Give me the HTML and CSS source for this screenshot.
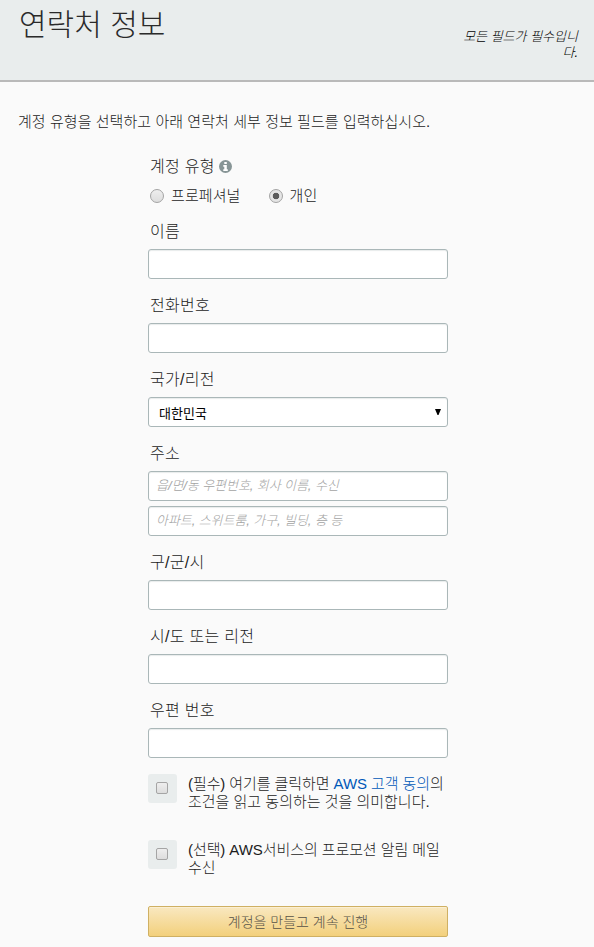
FILE: index.html
```html
<!DOCTYPE html>
<html lang="ko">
<head>
<meta charset="utf-8">
<title>연락처 정보</title>
<link rel="stylesheet" href="styles.css">
</head>
<body>
<header class="header">
  <h1 class="title">연락처 정보</h1>
  <p class="required">모든 필드가 필수입니<br>다.</p>
</header>
<main class="main">
  <p class="intro">계정 유형을 선택하고 아래 연락처 세부 정보 필드를 입력하십시오.</p>
  <form class="form">
    <div class="label type-label"><span>계정 유형</span>
      <svg class="info" viewBox="0 0 13 13"><circle cx="6.5" cy="6.5" r="6.5"/><path d="M5.300 2h2.500v2H5.300zM4.300 5h3.500v4.200h1V11H4.300V9.200h1V6.700h-1z"/></svg>
    </div>
    <div class="radios">
      <label class="choice"><input class="radio" type="radio" name="type"><span>프로페셔널</span></label>
      <label class="choice"><input class="radio" type="radio" name="type" checked><span>개인</span></label>
    </div>
    <div class="field"><label class="label">이름</label><input class="input" type="text"></div>
    <div class="field"><label class="label">전화번호</label><input class="input" type="text"></div>
    <div class="field"><label class="label">국가/리전</label>
      <div class="input select"><span>대한민국</span><svg class="arrow" viewBox="0 0 6 6"><path d="M0 0h6L3.500 6h-1z"/></svg></div>
    </div>
    <div class="field"><label class="label">주소</label>
      <input class="input" type="text" placeholder="읍/면/동 우편번호, 회사 이름, 수신">
      <input class="input second" type="text" placeholder="아파트, 스위트룸, 가구, 빌딩, 층 등">
    </div>
    <div class="field"><label class="label">구/군/시</label><input class="input" type="text"></div>
    <div class="field"><label class="label">시/도 또는 리전</label><input class="input" type="text"></div>
    <div class="field"><label class="label">우편 번호</label><input class="input" type="text"></div>
    <div class="agree">
      <span class="box"><input class="check" type="checkbox"></span>
      <p class="terms"><span class="tight">(필수) 여기를 클릭하면 <a class="link">AWS 고객 동의</a>의</span><br>조건을 읽고 동의하는 것을 의미합니다.</p>
    </div>
    <div class="agree">
      <span class="box"><input class="check" type="checkbox"></span>
      <p class="terms"><span class="tight">(선택) AWS서비스의 프로모션 알림 메일</span><br>수신</p>
    </div>
    <button class="submit" type="button">계정을 만들고 계속 진행</button>
  </form>
</main>
</body>
</html>
```
FILE: styles.css
```css
* { box-sizing: border-box; }
body {
  margin: 0;
  height: 947px;
  overflow: hidden;
  background: #fafafa;
  color: #1c1c1c;
  font-family: "Liberation Sans", "Noto Sans CJK KR", sans-serif;
  font-weight: 300;
}
h1, p { margin: 0; font-weight: 300; white-space: nowrap; }
.header {
  display: flex;
  justify-content: space-between;
  height: 82px;
  padding: 0 16px 0 19px;
  background: #e9eded;
  border-bottom: 2px solid #b9b9b9;
}
.title { font-size: 30px; line-height: 50px; color: #2a2a2a; }
.required {
  padding-top: 29px;
  font-size: 13px;
  line-height: 16px;
  font-style: italic;
  text-align: right;
  color: #000;
}
.main { padding-top: 26px; }
.intro { padding-left: 18px; font-size: 15px; line-height: 28px; letter-spacing: 0.06px; }
.form { width: 300px; margin: 12px 0 0 148px; }
.label { display: block; padding: 1px 0 0 2px; font-size: 16px; line-height: 36px; height: 36px; letter-spacing: 0.3px; }
.type-label { display: flex; align-items: center; gap: 4px; line-height: 35px; }
.info { width: 13px; height: 13px; fill: #879596; }
.info path { fill: #fff; }
.radios { display: flex; gap: 28px; height: 29px; padding-left: 2px; }
.choice { display: flex; gap: 7px; height: 24px; align-items: center; font-size: 15px; letter-spacing: 0.1px; white-space: nowrap; }
.choice span { line-height: 20px; padding-bottom: 1px; }
.radio {
  appearance: none;
  width: 14px;
  height: 14px;
  margin: 0;
  border: 1px solid #a3a3a3;
  border-radius: 50%;
  background: linear-gradient(#eee, #ddd);
}
.radio:checked { background: radial-gradient(circle, #5c5c5c 0 3px, #e5e5e5 3.6px); }
.field { margin-bottom: 8px; }
.input {
  display: block;
  width: 300px;
  height: 30px;
  margin: 0;
  padding: 0 8px 2px 7px;
  border: 1px solid #aab7b8;
  border-radius: 3px;
  background: #fff;
  box-shadow: inset 0 1px 1px #e8ecec;
  font: 300 13px "Liberation Sans", "Noto Sans CJK KR", sans-serif;
}
.input::placeholder { color: #a3a3a3; font-style: italic; letter-spacing: -0.08px; opacity: 1; }
.second { margin-top: 5px; }
.select { display: flex; align-items: center; justify-content: space-between; padding: 0 6px 0 10px; color: #000; font-weight: 400; }
.arrow { width: 6px; height: 6px; }
.agree { display: flex; gap: 11px; height: 66px; }
.field + .agree { margin-top: 16px; }
.box {
  display: flex;
  flex: none;
  align-items: center;
  justify-content: center;
  width: 29px;
  height: 29px;
  padding: 0 1px 1px 0;
  border-radius: 3px;
  background: #e9eded;
}
.check {
  appearance: none;
  width: 12px;
  height: 12px;
  margin: 0;
  border: 1px solid #a5a5a5;
  border-radius: 2px;
  background: linear-gradient(#eee, #ddd);
}
.terms { padding-top: 1px; font-size: 15px; line-height: 18px; }
.tight { letter-spacing: -0.08px; }
.link { color: #0058b8; }
.submit {
  display: block;
  width: 300px;
  height: 31px;
  margin: 0;
  padding: 0 0 2px;
  border: 1px solid #cfb063;
  border-radius: 2px;
  background: linear-gradient(#f9e8c0, #f3d07c);
  box-shadow: inset 0 1px 0 #fbefd2;
  color: #555147;
  font: 300 14px "Liberation Sans", "Noto Sans CJK KR", sans-serif;
}
```
